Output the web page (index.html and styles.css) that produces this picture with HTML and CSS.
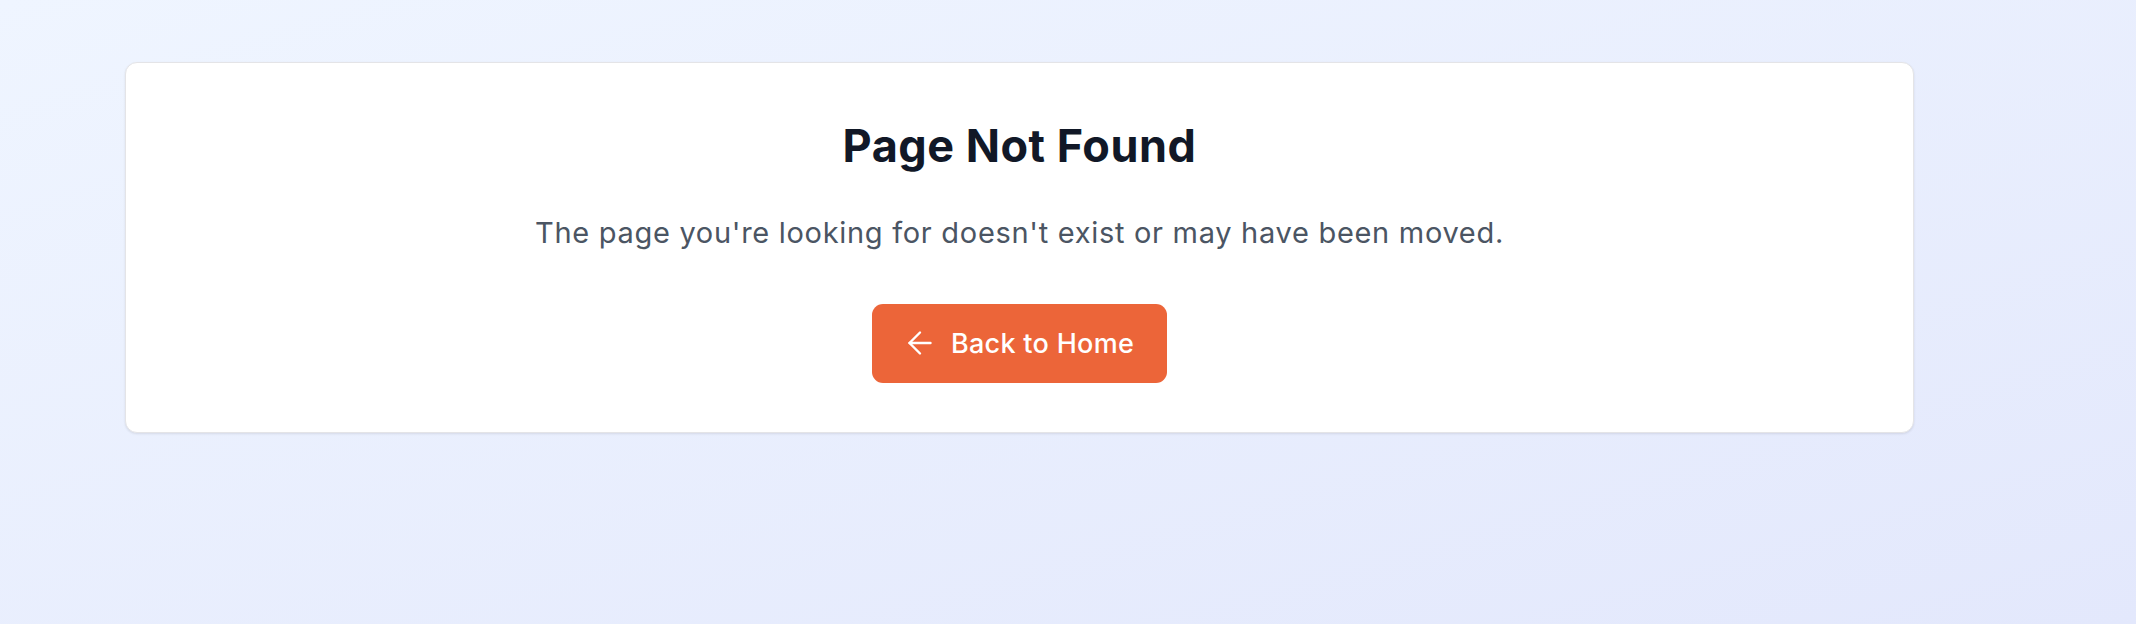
FILE: index.html
```html
<!DOCTYPE html>
<html lang="en">
<head>
<meta charset="utf-8">
<title>Page Not Found</title>
<link rel="stylesheet" href="styles.css">
</head>
<body>
  <main class="page">
    <section class="card">
      <h1 class="title">Page Not Found</h1>
      <p class="message">The page you're looking for doesn't exist or may have been moved.</p>
      <a class="btn" href="#">
        <svg class="btn-icon" viewBox="0 0 24 24" fill="none" stroke="currentColor" stroke-width="1.6" stroke-linecap="round" stroke-linejoin="round" aria-hidden="true">
          <path d="M12 19l-7-7 7-7"/>
          <path d="M19 12H5"/>
        </svg>
        <span>Back to Home</span>
      </a>
    </section>
  </main>
</body>
</html>
```
FILE: styles.css
```css
* { box-sizing: border-box; }
html, body { height: 100%; }
body {
  margin: 0;
  font-family: Inter, "Noto Sans", "Liberation Sans", sans-serif;
  background: linear-gradient(to bottom right, #eff5ff, #e3e8fc);
  min-height: 624px;
}
.page {
  padding: 62px 222px 0 125px;
}
.card {
  background: #ffffff;
  border: 1px solid #e4e4e7;
  border-radius: 12px;
  box-shadow: 0 1px 3px rgba(0,0,0,0.06), 0 1px 2px rgba(0,0,0,0.04);
  padding: 56px 48px 49px;
  display: flex;
  flex-direction: column;
  align-items: center;
  text-align: center;
}
.title {
  margin: 0;
  font-size: 45px;
  line-height: 1.2;
  font-weight: 700;
  color: #111827;
  letter-spacing: 0.5px;
}
.message {
  margin: 38px 0 0;
  font-size: 29px;
  line-height: 1.5;
  color: #4b5563;
  letter-spacing: 0.7px;
}
.btn {
  margin-top: 49px;
  height: 79px;
  display: inline-flex;
  align-items: center;
  gap: 13px;
  padding: 0 33px 0 30px;
  background: #ec6539;
  color: #ffffff;
  border-radius: 11px;
  text-decoration: none;
  font-size: 27px;
  font-weight: 500;
  letter-spacing: 0.3px;
}
.btn-icon {
  width: 36px;
  height: 36px;
  flex: none;
}
```
